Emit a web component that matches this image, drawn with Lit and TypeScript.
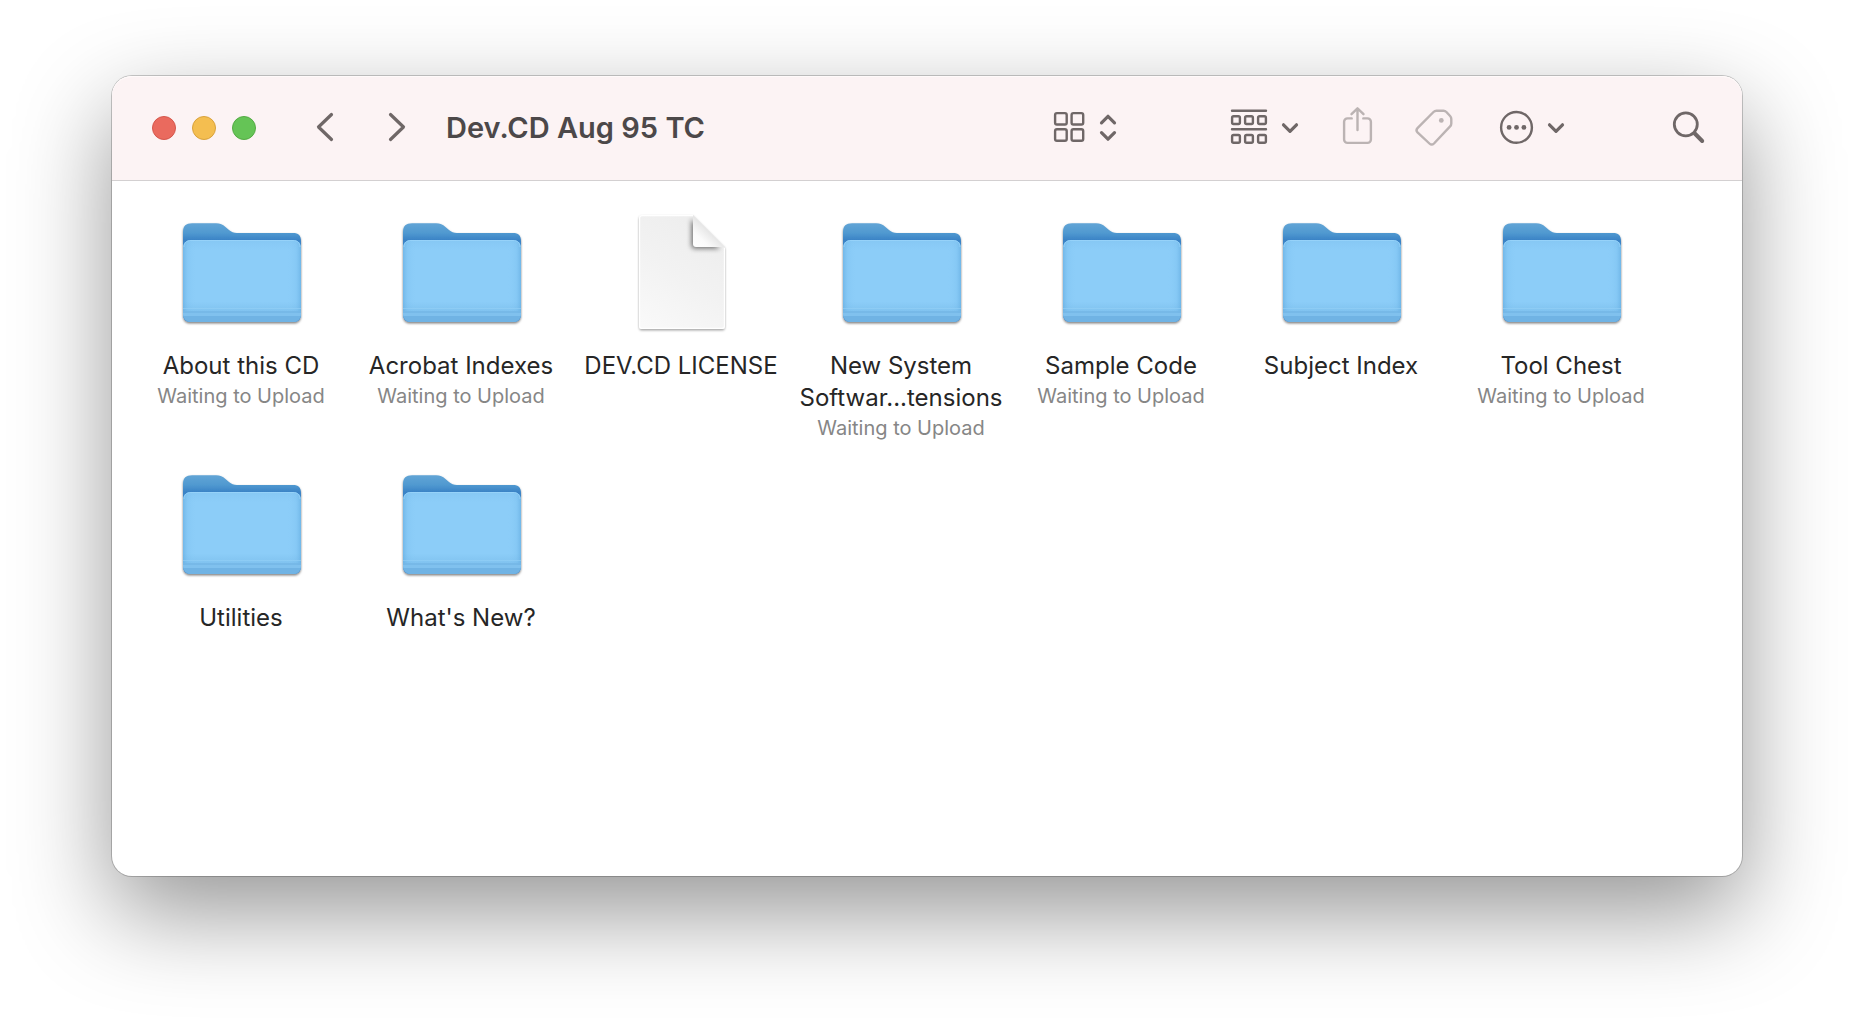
import { LitElement, html, css, svg, nothing } from "lit";
import { customElement, property } from "lit/decorators.js";

interface Entry {
  name: string;
  kind: "folder" | "document";
  status?: string;
}

const WAITING = "Waiting to Upload";

const ENTRIES: Entry[] = [
  { name: "About this CD", kind: "folder", status: WAITING },
  { name: "Acrobat Indexes", kind: "folder", status: WAITING },
  { name: "DEV.CD LICENSE", kind: "document" },
  { name: "New System Softwar...tensions", kind: "folder", status: WAITING },
  { name: "Sample Code", kind: "folder", status: WAITING },
  { name: "Subject Index", kind: "folder" },
  { name: "Tool Chest", kind: "folder", status: WAITING },
  { name: "Utilities", kind: "folder" },
  { name: "What's New?", kind: "folder" },
];

const folderArt = svg`
  <defs>
    <linearGradient id="back" x1="0" y1="14" x2="0" y2="34" gradientUnits="userSpaceOnUse">
      <stop offset="0" stop-color="#62a5d6" />
      <stop offset="0.5" stop-color="#5099d0" />
      <stop offset="0.85" stop-color="#3a83c6" />
      <stop offset="1" stop-color="#3a83c6" />
    </linearGradient>
    <linearGradient id="sides" x1="5" y1="0" x2="123" y2="0" gradientUnits="userSpaceOnUse">
      <stop offset="0" stop-color="#5fa9de" stop-opacity="0.6" />
      <stop offset="0.04" stop-color="#70b8ea" stop-opacity="0.22" />
      <stop offset="0.12" stop-color="#8ccdf8" stop-opacity="0" />
      <stop offset="0.88" stop-color="#8ccdf8" stop-opacity="0" />
      <stop offset="0.96" stop-color="#70b8ea" stop-opacity="0.22" />
      <stop offset="1" stop-color="#5fa9de" stop-opacity="0.6" />
    </linearGradient>
    <linearGradient id="front" x1="0" y1="31" x2="0" y2="113" gradientUnits="userSpaceOnUse">
      <stop offset="0" stop-color="#86c8f4" />
      <stop offset="0.12" stop-color="#8ccdf8" />
      <stop offset="0.75" stop-color="#8ccdf8" />
      <stop offset="0.83" stop-color="#84c6f2" />
      <stop offset="1" stop-color="#76b9e9" />
    </linearGradient>
    <clipPath id="face"><rect x="5" y="31" width="118" height="82" rx="8" /></clipPath>
    <filter id="shade" x="-10%" y="-10%" width="120%" height="125%">
      <feDropShadow dx="0" dy="1.400" stdDeviation="1.200" flood-color="#000" flood-opacity="0.5" />
    </filter>
  </defs>
  <g filter="url(#shade)">
    <path fill="url(#back)" d="M5 23c0-6 3-8.700 9-8.700H38c4.500 0 6.500 1.200 9.500 3.700l3.500 3c2.500 2 4.500 3 8 3H115c5.500 0 8 2.500 8 8v73c0 5.500-2.500 8-8 8H13c-5.500 0-8-2.500-8-8z" />
    <rect x="5" y="31" width="118" height="82" rx="8" fill="url(#front)" />
    <rect x="5" y="31" width="118" height="82" rx="8" fill="url(#sides)" />
  </g>
  <path d="M6 38c0-4.500 2.500-6.500 7-6.500h102c4.500 0 7 2 7 6.500" fill="none" stroke="#9ad5fa" stroke-width="1" opacity="0.8" />
  <g clip-path="url(#face)">
    <rect x="5" y="99" width="118" height="1" fill="#94d0f6" opacity="0.6" />
    <rect x="5" y="102" width="118" height="2" fill="#74b7e6" opacity="0.8" />
    <rect x="5" y="104" width="118" height="3" fill="#80c1ee" />
    <rect x="5" y="107" width="118" height="6" fill="#70b3e4" />
  </g>
`;

const documentArt = svg`
  <defs>
    <linearGradient id="page" x1="28" y1="118" x2="96" y2="14" gradientUnits="userSpaceOnUse">
      <stop offset="0" stop-color="#f9f9f9" />
      <stop offset="0.5" stop-color="#f2f2f2" />
      <stop offset="1" stop-color="#ededed" />
    </linearGradient>
    <linearGradient id="curl" x1="76" y1="38" x2="91" y2="22" gradientUnits="userSpaceOnUse">
      <stop offset="0" stop-color="#ffffff" />
      <stop offset="0.5" stop-color="#fafafa" />
      <stop offset="1" stop-color="#e6e6e6" />
    </linearGradient>
    <clipPath id="sheet"><path d="M24 6H75L107 38V117q0 3-3 3H24q-3 0-3-3V9q0-3 3-3z" /></clipPath>
    <filter id="drop" x="-10%" y="-10%" width="120%" height="120%">
      <feDropShadow dx="0" dy="1.400" stdDeviation="0.9" flood-color="#000" flood-opacity="0.36" />
    </filter>
    <filter id="soft" x="-30%" y="-30%" width="160%" height="160%">
      <feGaussianBlur stdDeviation="2.600" />
    </filter>
  </defs>
  <path filter="url(#drop)" fill="url(#page)" d="M24 6H75L107 38V117q0 3-3 3H24q-3 0-3-3V9q0-3 3-3z" />
  <g clip-path="url(#sheet)">
    <path filter="url(#soft)" fill="#000" opacity="0.55" d="M73.500 10V36.500q0 3 3 3H102z" />
  </g>
  <path fill="none" stroke="#fff" stroke-width="1.200" d="M75 6.600H24q-2.400 0-2.400 2.400V117q0 2.400 2.400 2.400H104q2.400 0 2.400-2.400V39" />
  <path fill="url(#curl)" d="M75 6L107 38H78q-3 0-3-3z" />
`;

@customElement("file-tile")
export class FileTile extends LitElement {
  @property({ attribute: false }) entry!: Entry;

  static styles = css`
    :host {
      display: block;
    }
    .tile {
      display: flex;
      flex-direction: column;
      align-items: center;
      width: 100%;
      padding: 0;
      border: 0;
      background: none;
      font: inherit;
      text-align: center;
      color: #262626;
    }
    .art {
      display: block;
      width: 128px;
      height: 128px;
      margin-bottom: 13px;
    }
    .name {
      font-size: 24px;
      line-height: 32px;
    }
    .status {
      font-size: 20px;
      line-height: 28px;
      color: #868686;
    }
  `;

  render() {
    const { name, kind, status } = this.entry;
    return html`
      <button class="tile" type="button">
        <svg class="art" viewBox="-1 0 128 128" aria-hidden="true">
          ${kind === "folder" ? folderArt : documentArt}
        </svg>
        <span class="name">${name}</span>
        ${status ? html`<span class="status">${status}</span>` : nothing}
      </button>
    `;
  }
}

@customElement("app-root")
export class AppRoot extends LitElement {
  static styles = css`
    :host {
      display: block;
      box-sizing: border-box;
      min-height: 100vh;
      padding: 76px 112px 148px;
      overflow: hidden;
      background: #fff;
      font-family: Inter, "Liberation Sans", sans-serif;
    }
    .window {
      display: flex;
      flex-direction: column;
      min-height: calc(100vh - 224px);
      border-radius: 20px;
      background: #fff;
      box-shadow:
        0 0 0 1px rgba(0, 0, 0, 0.2),
        0 36px 96px rgba(0, 0, 0, 0.42);
    }
    .bar {
      display: flex;
      align-items: center;
      height: 104px;
      padding: 0 36px 0 40px;
      border-bottom: 1px solid #d3d0d1;
      border-radius: 20px 20px 0 0;
      background: #fcf3f4;
      box-shadow: inset 0 1px #fffafa;
      color: #6f6767;
    }
    button {
      padding: 0;
      border: 0;
      background: none;
      color: inherit;
      font: inherit;
    }
    .lights,
    .history,
    .tools {
      display: flex;
      align-items: center;
    }
    .lights {
      gap: 16px;
      margin-right: 48px;
    }
    .light {
      box-sizing: border-box;
      width: 24px;
      height: 24px;
      border: 1px solid;
      border-radius: 50%;
    }
    .close {
      background: #ea6a5e;
      border-color: #d5574c;
    }
    .minimize {
      background: #f4be50;
      border-color: #d9a23c;
    }
    .zoom {
      background: #65c456;
      border-color: #54ab44;
    }
    .history {
      gap: 32px;
      margin-right: 30px;
    }
    .title {
      margin: 0;
      font-size: 29px;
      line-height: 36px;
      font-weight: 600;
      white-space: nowrap;
      color: #4c4849;
    }
    .tools {
      gap: 40px;
      margin-left: auto;
    }
    .tool svg,
    .history svg {
      display: block;
      overflow: visible;
      fill: none;
      stroke: currentColor;
      stroke-width: 2.4;
      stroke-linecap: round;
      stroke-linejoin: round;
    }
    .tool .bold,
    .history svg {
      stroke-width: 3.2;
    }
    .tool .handle {
      stroke-width: 4;
    }
    .tool .dot {
      fill: currentColor;
      stroke: none;
    }
    .view {
      margin-right: 68px;
    }
    .search {
      margin-left: 60px;
    }
    .off {
      color: #bbb3b3;
    }
    .files {
      display: grid;
      grid-template-columns: repeat(auto-fill, 220px);
      row-gap: 19px;
      padding: 28px 0 28px 19px;
    }
  `;

  render() {
    return html`
      <main class="window">
        <header class="bar">
          <div class="lights">
            <button class="light close" type="button" aria-label="Close"></button>
            <button class="light minimize" type="button" aria-label="Minimize"></button>
            <button class="light zoom" type="button" aria-label="Zoom"></button>
          </div>
          <div class="history">
            <button type="button" aria-label="Back">
              <svg width="40" height="48"><path d="M27.500 10.500L14.500 23L27.500 35.500" /></svg>
            </button>
            <button type="button" aria-label="Forward">
              <svg width="40" height="48"><path d="M14.500 10.500L27.500 23L14.500 35.500" /></svg>
            </button>
          </div>
          <h1 class="title">Dev.CD Aug 95 TC</h1>
          <div class="tools">
            <button class="tool view" type="button" aria-label="View as icons">
              <svg width="68" height="48">
                <rect x="3.100" y="9.100" width="11.600" height="11.400" rx="1.800" />
                <rect x="19.600" y="9.100" width="11.600" height="11.400" rx="1.800" />
                <rect x="3.100" y="25.300" width="11.600" height="11.400" rx="1.800" />
                <rect x="19.600" y="25.300" width="11.600" height="11.400" rx="1.800" />
                <path class="bold" d="M49.500 18.800L56 12.300L62.500 18.800M49.500 28.700L56 35.200L62.500 28.700" />
              </svg>
            </button>
            <button class="tool" type="button" aria-label="Group items">
              <svg width="72" height="48">
                <path d="M4 6.700H38M4 25.300H38" />
                <rect x="4.100" y="12.200" width="7.800" height="7.800" rx="1.500" />
                <rect x="17.100" y="12.200" width="7.800" height="7.800" rx="1.500" />
                <rect x="30.100" y="12.200" width="7.800" height="7.800" rx="1.500" />
                <rect x="4.100" y="31" width="7.800" height="7.800" rx="1.500" />
                <rect x="17.100" y="31" width="7.800" height="7.800" rx="1.500" />
                <rect x="30.100" y="31" width="7.800" height="7.800" rx="1.500" />
                <path class="bold" d="M55.500 20.800L62 27.300L68.500 20.800" />
              </svg>
            </button>
            <button class="tool off" type="button" aria-label="Share">
              <svg width="36" height="48">
                <path d="M11.700 14.400H7.500a3.400 3.400 0 0 0-3.400 3.400V35.500a3.400 3.400 0 0 0 3.400 3.400H27.500a3.400 3.400 0 0 0 3.400-3.400V17.800a3.400 3.400 0 0 0-3.400-3.400H23.300M17.500 26V4.500M11.500 10.200L17.500 4.300L23.500 10.200" />
              </svg>
            </button>
            <button class="tool off" type="button" aria-label="Edit tags">
              <svg width="40" height="48">
                <path d="M20.500 6.800H27.500q1.700 0 2.900 1.200L34.100 12q1.200 1.300 1.200 3V19.500q0 1.700-1.200 2.900L18 39.500q-2.300 2.200-4.600 0L1.500 28.300q-2-2.100 0-4.200L17.500 8q1.200-1.200 3-1.200z" />
                <circle class="dot" cx="25.300" cy="16.400" r="2.400" />
              </svg>
            </button>
            <button class="tool" type="button" aria-label="More actions">
              <svg width="72" height="48">
                <circle cx="20.500" cy="23.400" r="15.400" />
                <circle class="dot" cx="13.100" cy="23.400" r="2.400" />
                <circle class="dot" cx="20.500" cy="23.400" r="2.400" />
                <circle class="dot" cx="27.900" cy="23.400" r="2.400" />
                <path class="bold" d="M53.500 20.800L60 27.300L66.500 20.800" />
              </svg>
            </button>
            <button class="tool search" type="button" aria-label="Search">
              <svg width="38" height="48">
                <circle cx="17.800" cy="20.300" r="11.500" stroke-width="2.800" />
                <path class="handle" d="M26.800 29.500L34.200 37" />
              </svg>
            </button>
          </div>
        </header>
        <section class="files" aria-label="Files">
          ${ENTRIES.map((entry) => html`<file-tile .entry=${entry}></file-tile>`)}
        </section>
      </main>
    `;
  }
}
